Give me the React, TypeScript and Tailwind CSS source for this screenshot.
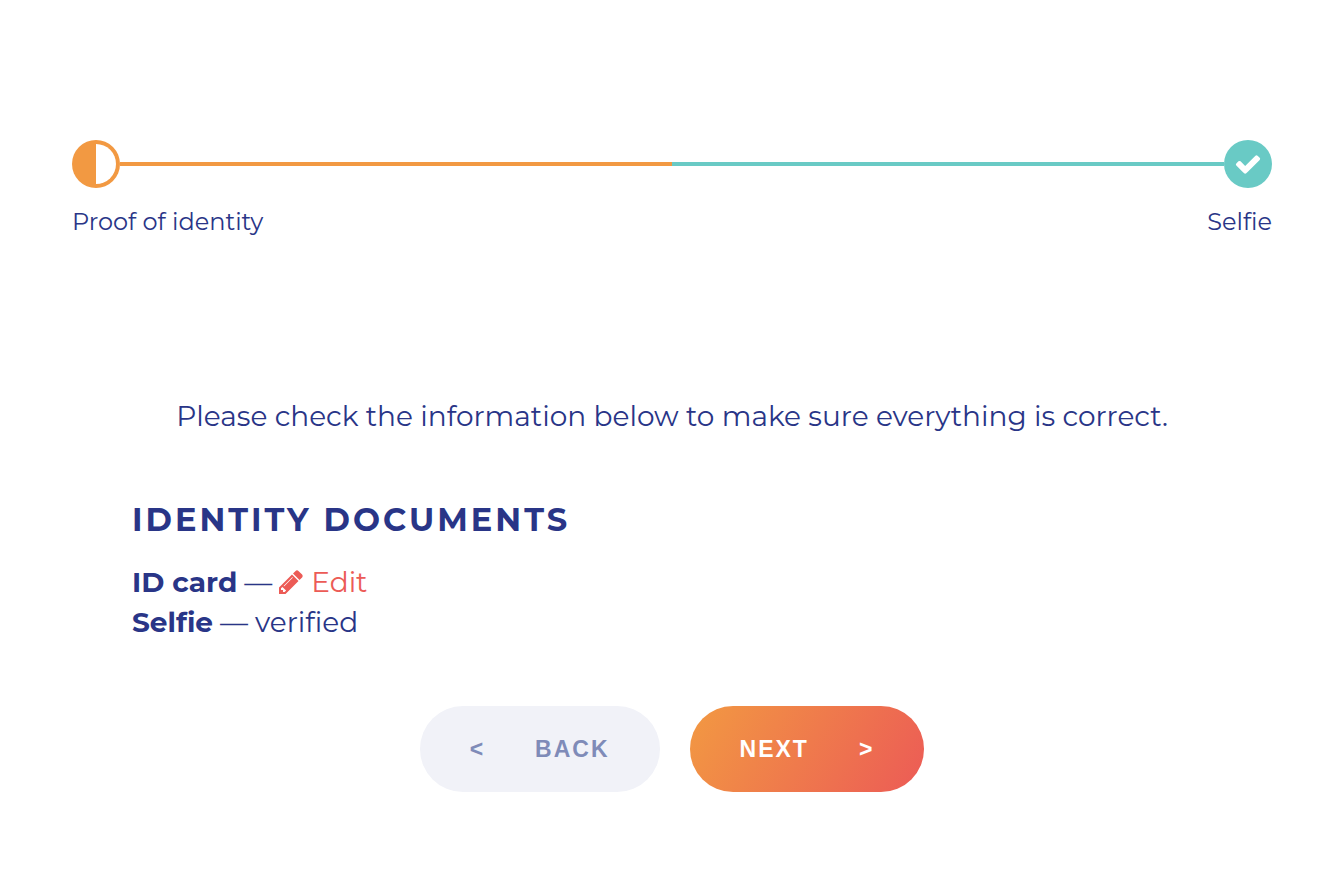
import React from 'react';

const CheckIcon: React.FC = () => (
  <svg viewBox="0 0 1792 1792" className="w-7 h-7 fill-white" aria-hidden="true">
    <path d="M1671 566q0 40-28 68l-724 724-136 136q-28 28-68 28t-68-28l-136-136-362-362q-28-28-28-68t28-68l136-136q28-28 68-28t68 28l294 295 656-657q28-28 68-28t68 28l136 136q28 28 28 68z" />
  </svg>
);

const PencilIcon: React.FC = () => (
  <svg viewBox="0 0 1536 1536" className="w-6 h-6 fill-current" aria-hidden="true">
    <path d="M363 1408l91-91-235-235-91 91v107h128v128h107zM886 480q0-22-22-22-10 0-17 7l-542 542q-7 7-7 17 0 22 22 22 10 0 17-7l542-542q7-7 7-17zM832 288l416 416-832 832h-416v-416zM1515 384q0 53-37 90l-166 166-416-416 166-165q36-38 90-38 53 0 91 38l235 234q37 39 37 91z" />
  </svg>
);

const Stepper: React.FC = () => (
  <div>
    <div className="flex items-center">
      <div className="w-12 h-12 rounded-full bg-[#f29942] p-1">
        <div className="w-1/2 h-full ml-auto rounded-r-full bg-white" />
      </div>
      <div className="flex-1 h-1 bg-[#f29942]" />
      <div className="flex-1 h-1 bg-[#69cac5]" />
      <div className="w-12 h-12 rounded-full bg-[#69cac5] flex items-center justify-center">
        <CheckIcon />
      </div>
    </div>
    <div className="flex justify-between mt-4 text-2xl leading-9">
      <span>Proof of identity</span>
      <span>Selfie</span>
    </div>
  </div>
);

export default function App() {
  return (
    <main className="min-h-screen bg-white pt-[140px] pb-20 pl-[72px] pr-[68px] font-['Montserrat','Inter',sans-serif] text-[#293587] antialiased [font-variant-ligatures:none]">
      <Stepper />

      {/* Summary */}
      <section className="mt-[156px] px-[60px]">
        <p className="text-center text-[28px] leading-10">
          Please check the information below to make sure everything is correct.
        </p>
        <h2 className="mt-16 text-[32px] leading-10 font-bold tracking-[3px] uppercase">Identity documents</h2>
        <ul className="mt-[22px] text-[28px] leading-10">
          <li className="flex items-center gap-[7px]">
            <strong>ID card</strong>
            <span>—</span>
            <a href="#edit" className="flex items-center gap-2 text-[#ec5b56]">
              <PencilIcon />
              Edit
            </a>
          </li>
          <li className="flex items-center gap-[7px]">
            <strong>Selfie</strong>
            <span>—</span>
            <span>verified</span>
          </li>
        </ul>
      </section>

      {/* Actions */}
      <div className="mt-16 flex justify-center gap-[30px] font-['Liberation_Sans',Arial,sans-serif] text-[23px] leading-[30px] font-bold tracking-[2px]">
        <button type="button" className="flex items-center gap-[50px] rounded-full bg-[#f1f2f8] px-[50px] py-7 text-[#7f8bb8]">
          <span>&lt;</span>
          <span>BACK</span>
        </button>
        <button type="button" className="flex items-center gap-[50px] rounded-full bg-linear-[120deg,#f29942,#ec5b56] px-[50px] py-7 text-white">
          <span>NEXT</span>
          <span>&gt;</span>
        </button>
      </div>
    </main>
  );
}
